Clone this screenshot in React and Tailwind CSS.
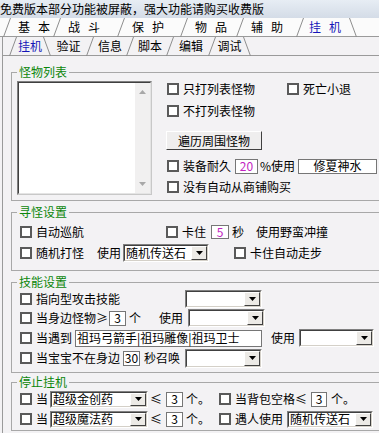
import React from 'react';

// slanted tab edge, "/" by default, "\" when back is set
const Slant = ({ back = false, h = 19 }) => (
  <svg width="8" height={h} className="block shrink-0">
    {back ? (
      <line x1="0.5" y1="0" x2="7.5" y2={h} stroke="#8e8e8e" />
    ) : (
      <line x1="0.5" y1={h} x2="7.5" y2="0" stroke="#8e8e8e" />
    )}
  </svg>
);

const Check = ({ label, className = '' }) => (
  <div className={`flex items-center shrink-0 ${className}`}>
    <span className="w-[12px] h-[12px] border-2 border-[#5a5a5a] bg-white shrink-0" />
    <span className="ml-[4px] whitespace-nowrap">{label}</span>
  </div>
);

const Edit = ({ value, className = '' }) => (
  <div className={`flex items-center shrink-0 bg-white border border-[#767676] leading-[12px] whitespace-nowrap ${className}`}>
    {value}
  </div>
);

const Arrow = ({ color = '#000' }) => (
  <svg width="7" height="4" className="block">
    <path d="M0 0h7L3.5 4z" fill={color} />
  </svg>
);

const Select = ({ value, className = '' }) => (
  <div className={`flex shrink-0 bg-white border border-t-[#808080] border-l-[#808080] border-r-white border-b-white ${className}`}>
    <div className="flex-1 min-w-0 flex border border-t-[#404040] border-l-[#404040] border-r-[#d4d0c8] border-b-[#d4d0c8]">
      <div className="flex-1 min-w-0 pl-[1px] flex items-center leading-[12px] whitespace-nowrap">{value}</div>
      <div className="w-[16px] shrink-0 flex items-center justify-center bg-[#eceae6] border border-t-white border-l-white border-r-[#404040] border-b-[#404040]">
        <Arrow />
      </div>
    </div>
  </div>
);

const Group = ({ title, className = '', children }) => (
  <fieldset className={`ml-[11px] w-[400px] border border-[#a8a8a8] pl-[5px] ${className}`}>
    <legend className="px-[2px] h-[12px] leading-[12px] text-[#0b870b]">{title}</legend>
    {children}
  </fieldset>
);

// spaced label of a top tab: 基 本
const Spaced = ({ text }) => (
  <span className="flex gap-[8px]">
    {text.split('').map((c) => (
      <span key={c}>{c}</span>
    ))}
  </span>
);

const TOP_TABS = [
  ['基本', 'w-[42px]'],
  ['战斗', 'w-[56px]'],
  ['保护', 'w-[55px]'],
  ['物品', 'w-[48px]'],
  ['辅助', 'w-[52px]'],
];

const SUB_TABS = [
  ['验证', 'w-[35px]'],
  ['信息', 'w-[32px]'],
  ['脚本', 'w-[32px]'],
  ['编辑', 'w-[34px]'],
];

export default function App() {
  return (
    <div className="w-[379px] h-[433px] overflow-hidden bg-[#f3f2f4] text-[12px] leading-[14px] text-black font-['Noto_Sans_CJK_SC',sans-serif]">
      <div className="h-[18px] leading-[18px] whitespace-nowrap bg-gradient-to-b from-[#e7edf4] to-[#d4dce7]">
        免费版本部分功能被屏蔽，强大功能请购买收费版
      </div>

      {/* top tabs */}
      <div className="flex h-[19px] pl-[3px] border-b border-[#9a9a9a] bg-[#fbfbfb]">
        {TOP_TABS.map(([t, w]) => (
          <React.Fragment key={t}>
            <Slant />
            <div className={`${w} pl-[7px] flex items-center whitespace-nowrap`}>
              <Spaced text={t} />
            </div>
          </React.Fragment>
        ))}
        <Slant />
        <div className="w-[45px] pl-[5px] flex items-center whitespace-nowrap text-[#1515b8]">
          <Spaced text="挂机" />
        </div>
        <Slant back />
      </div>

      <div className="ml-[2px] border-l border-[#9a9a9a] h-[396px]">
        {/* sub tabs */}
        <div className="flex h-[19px] pl-[6px] border-b border-[#9a9a9a]">
          <Slant />
          <div className="w-[26px] flex items-center justify-center text-[#1515b8]">挂机</div>
          <Slant back />
          {SUB_TABS.map(([t, w]) => (
            <React.Fragment key={t}>
              <div className={`${w} flex items-center justify-center`}>{t}</div>
              <Slant />
            </React.Fragment>
          ))}
          <div className="w-[27px] flex items-center justify-center">调试</div>
          <Slant back />
        </div>

        <div className="-ml-[3px]">
          {/* 怪物列表 */}
          <Group title="怪物列表" className="mt-[10px] pb-[3px]">
            <div className="flex">
              <div className="mt-[3px] w-[135px] h-[114px] flex bg-white border border-t-[#808080] border-l-[#808080] border-r-[#c8c8c8] border-b-[#c8c8c8]">
                <div className="flex-1 flex border border-t-[#404040] border-l-[#404040] border-r-[#e4e4e4] border-b-[#e4e4e4]">
                  <div className="flex-1" />
                  <div className="w-[15px] bg-[#f1f0f0] flex flex-col justify-between items-center py-[7px]">
                    <svg width="7" height="4" className="block">
                      <path d="M0 4h7L3.5 0z" fill="#a8a8a8" />
                    </svg>
                    <Arrow color="#a8a8a8" />
                  </div>
                </div>
              </div>

              <div className="ml-[15px] flex flex-col">
                <div className="h-[22px] flex items-center">
                  <Check label="只打列表怪物" className="w-[120px]" />
                  <Check label="死亡小退" />
                </div>
                <div className="h-[22px] flex items-center">
                  <Check label="不打列表怪物" />
                </div>
                <div className="mt-[9px] -ml-[1px] w-[96px] h-[19px] flex items-center justify-center bg-[#efeeee] border border-t-white border-l-white border-r-[#404040] border-b-[#404040]">
                  遍历周围怪物
                </div>
                <div className="mt-[5px] h-[22px] flex items-center">
                  <Check label="装备耐久" />
                  <Edit value="20" className="ml-[4px] w-[23px] h-[15px] justify-center text-[#c21fc2]" />
                  <span className="ml-[2px] whitespace-nowrap">%使用</span>
                  <Edit value="修夏神水" className="ml-[3px] w-[79px] h-[15px] justify-center bg-[#fcfcfc]" />
                </div>
                <div className="h-[20px] flex items-center">
                  <Check label="没有自动从商铺购买" />
                </div>
              </div>
            </div>
          </Group>

          {/* 寻怪设置 */}
          <Group title="寻怪设置" className="mt-[5px] pb-[7px]">
            <div className="ml-[3px] mt-[3px]">
              <div className="h-[21px] flex items-center">
                <Check label="自动巡航" className="w-[146px]" />
                <Check label="卡住" />
                <Edit value="5" className="ml-[5px] w-[18px] h-[14px] justify-center text-[#c21fc2]" />
                <span className="ml-[3px]">秒</span>
                <span className="ml-[12px] whitespace-nowrap">使用野蛮冲撞</span>
              </div>
              <div className="h-[21px] flex items-center">
                <Check label="随机打怪" />
                <span className="ml-[13px] whitespace-nowrap">使用</span>
                <Select value="随机传送石" className="ml-[2px] w-[86px] h-[18px]" />
                <Check label="卡住自动走步" className="ml-[25px]" />
              </div>
            </div>
          </Group>

          {/* 技能设置 */}
          <Group title="技能设置" className="mt-[5px] pb-[4px]">
            <div className="ml-[3px] mt-[1px]">
              <div className="h-[19px] flex items-center">
                <Check label="指向型攻击技能" className="w-[165px]" />
                <Select className="w-[77px] h-[18px]" />
              </div>
              <div className="h-[20px] flex items-center">
                <Check label="当身边怪物≥" />
                <Edit value="3" className="ml-[1px] w-[17px] h-[15px] justify-center" />
                <span className="ml-[3px]">个</span>
                <span className="ml-[18px] whitespace-nowrap">使用</span>
                <Select className="ml-[5px] w-[77px] h-[18px]" />
              </div>
              <div className="h-[20px] flex items-center">
                <Check label="当遇到" />
                <Edit value="祖玛弓箭手|祖玛雕像|祖玛卫士" className="ml-[3px] w-[187px] h-[17px] pl-[1px]" />
                <span className="ml-[9px] whitespace-nowrap">使用</span>
                <Select className="ml-[4px] w-[75px] h-[18px]" />
              </div>
              <div className="h-[20px] flex items-center">
                <Check label="当宝宝不在身边" />
                <Edit value="30" className="ml-[3px] w-[17px] h-[15px] justify-center" />
                <span className="ml-[4px] whitespace-nowrap">秒召唤</span>
                <Select className="ml-[5px] w-[77px] h-[19px]" />
              </div>
            </div>
          </Group>

          {/* 停止挂机 */}
          <Group title="停止挂机" className="mt-[3px] pb-[1px]">
            <div className="ml-[3px] mt-[1px]">
              <div className="h-[20px] flex items-center">
                <div className="w-[199px] flex items-center">
                  <Check label="当" />
                  <Select value="超级金创药" className="ml-[2px] w-[98px] h-[17px]" />
                  <span className="ml-[2px]">≤</span>
                  <Edit value="3" className="ml-[4px] w-[17px] h-[15px] justify-center" />
                  <span className="ml-[3px] whitespace-nowrap">个。</span>
                </div>
                <Check label="当背包空格≤" />
                <Edit value="3" className="ml-[4px] w-[16px] h-[15px] justify-center" />
                <span className="ml-[4px] whitespace-nowrap">个。</span>
              </div>
              <div className="h-[20px] flex items-center">
                <div className="w-[199px] flex items-center">
                  <Check label="当" />
                  <Select value="超级魔法药" className="ml-[2px] w-[98px] h-[17px]" />
                  <span className="ml-[2px]">≤</span>
                  <Edit value="3" className="ml-[4px] w-[17px] h-[15px] justify-center" />
                  <span className="ml-[3px] whitespace-nowrap">个。</span>
                </div>
                <Check label="遇人使用" />
                <Select value="随机传送石" className="ml-[4px] w-[86px] h-[17px]" />
              </div>
            </div>
          </Group>
        </div>
      </div>
    </div>
  );
}
